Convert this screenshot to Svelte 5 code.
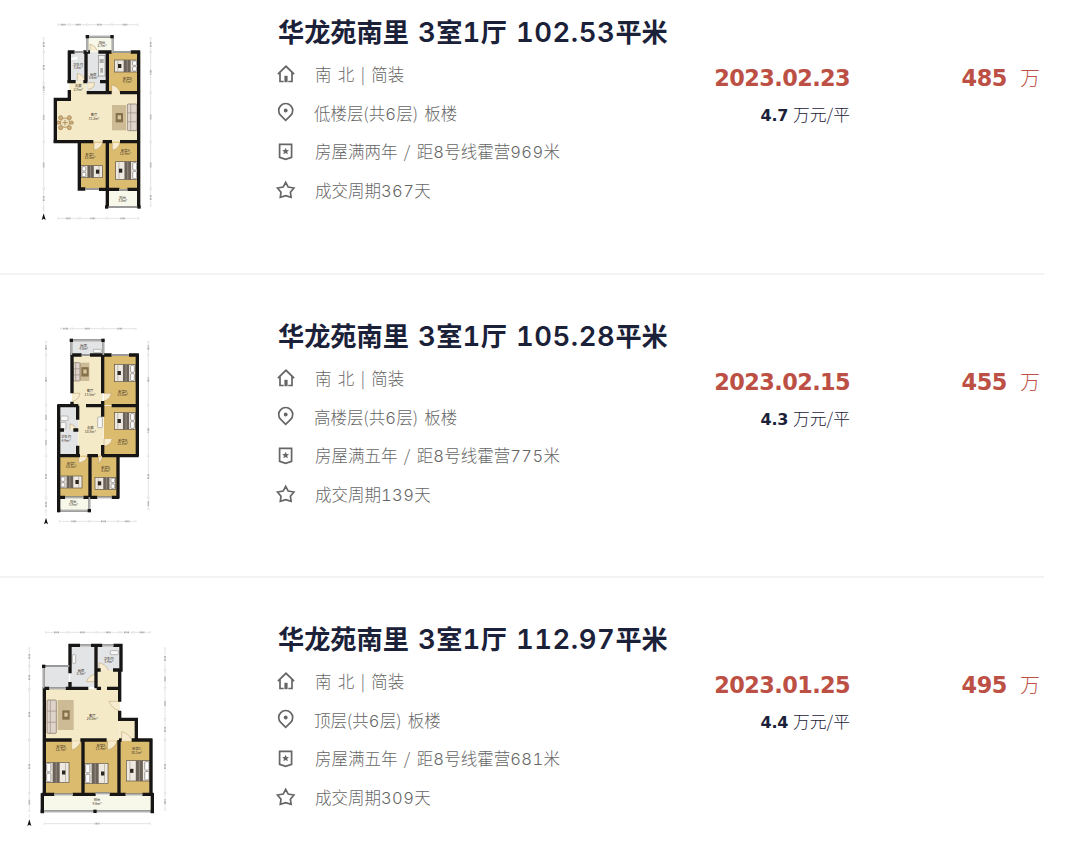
<script>
  const TAN = '#dbbb6e'
  const CREAM = '#f5eac8'
  const GREY = '#e3e4e6'
  const PALE = '#f7f8e9'

  // Floor plans are drawn at three units per pixel
  const planA = {
    dx: 90,
    dy: 30,
    rooms: [
      [172, 80, 76, 46, PALE], [118, 126, 50, 88, GREY], [170, 126, 62, 120, GREY],
      [118, 214, 52, 52, CREAM], [234, 126, 92, 122, TAN], [78, 266, 248, 129, CREAM],
      [122, 248, 204, 20, CREAM],
      [150, 395, 82, 142, TAN], [236, 395, 90, 142, TAN], [230, 542, 98, 50, PALE],
    ],
    walls: 'M118 122V218M114 126H134M160 126H180M205 126H245M302 126H330M168 126V215M232 126V250M326 122V592M112 215H137M160 215H172M210 215H232M118 240V268H76V395H190M170 248H245M270 248H326M218 395H246M270 395H326M148 395V537H166M232 395V592M207 538H268M292 538H330',
    windows: 'M134 126H160M245 126H302M172 80V126M172 80H248V126M166 537H207M268 540H292M230 591H328',
    dots: [[172, 80], [246, 80], [230, 591], [327, 591], [76, 394]],
    beds: [[253, 150, 70, 36, true], [153, 467, 64, 36, false], [257, 455, 66, 54, true]],
    rugs: [[246, 285, 42, 76]],
    sofas: [[292, 282, 29, 80]],
    doors: 'M142 212V190Q160 194 166 212M174 218H194Q194 236 174 238M245 248V225Q266 230 270 248M192 398V420Q212 416 218 398M247 398V420Q266 416 270 398M180 122V102Q196 106 202 122',
    labels: [
      [216, 101, '阳台', '2.7m²'], [144, 168, '卫生间', '3.8m²'], [190, 198, '厨房', '5.6m²'],
      [145, 232, '走廊', '2.9m²'], [292, 210, '卧室B', '9.3m²'], [192, 319, '客厅', '31.2m²'],
      [180, 437, '卧室C', '10.8m²'], [286, 425, '卧室A', '12.4m²'], [278, 566, '阳台', '3.8m²'],
    ],
    table: [105, 338],
    top: { y: 44, stops: [82, 118, 172, 245, 326] },
    bottom: { y: 625, stops: [82, 148, 230, 328] },
    left: { x: 41, stops: [82, 126, 220, 250, 395, 536, 596] },
    right: { x: 362, stops: [82, 126, 248, 395, 536, 590] },
    north: [41, 622],
  }

  const planB = {
    dx: 90,
    dy: 33,
    rooms: [
      [124, 76, 94, 42, GREY], [126, 120, 92, 150, CREAM], [222, 120, 100, 150, TAN],
      [86, 272, 58, 148, GREY], [145, 268, 76, 156, CREAM], [222, 272, 100, 150, TAN],
      [88, 422, 92, 125, TAN], [184, 422, 80, 125, TAN], [86, 550, 92, 38, PALE],
    ],
    walls: 'M126 118V235M126 260V270M218 120V235M218 258V305M218 390V422M322 116V424M122 120H155M180 120H245M297 120H326M82 272H145M168 272H215M245 272H322M86 270V586M143 272V314M143 392V422M86 345H102M130 345H145M82 422H150M172 422H204M216 422H326M180 422V549M264 422V549M82 547H105M160 547H202M245 547H268',
    windows: 'M155 120H180M245 120H297M124 76H220V120M124 76V120M105 547H160M202 547H245M86 587H178V547',
    dots: [[124, 76], [219, 76], [86, 587], [178, 587]],
    beds: [[254, 148, 62, 52, true], [254, 293, 62, 50, true], [90, 483, 66, 36, false], [195, 487, 62, 36, true]],
    rugs: [[150, 143, 28, 55]],
    sofas: [[130, 143, 20, 55]],
    doors: 'M130 235H150Q146 254 130 258M222 235H244Q240 254 222 258M146 425V444Q166 440 172 425M206 425V446Q212 440 218 425M222 372V394Q244 390 246 372M120 344V326Q136 330 140 344',
    labels: [
      [161, 95, '厨房', '4.0m²'], [180, 232, '客厅', '13.5m²'], [278, 234, '卧室A', '13.0m²'],
      [108, 370, '卫生间', '4.9m²'], [181, 343, '走廊', '10.5m²'], [278, 380, '卧室B', '11.8m²'],
      [124, 450, '卧室C', '10.5m²'], [227, 461, '卧室D', '8.8m²'], [130, 564, '阳台', '3.9m²'],
    ],
    props: [[203, 306, 14, 32], [92, 303, 22, 14], [92, 322, 16, 20], [190, 103, 24, 10]],
    top: { y: 41, stops: [90, 125, 220, 320] },
    bottom: { y: 619, stops: [86, 178, 264, 320] },
    left: { x: 48, stops: [78, 120, 270, 345, 422, 548, 590] },
    right: { x: 355, stops: [78, 120, 270, 422, 548, 585] },
    north: [48, 620],
  }

  const planC = {
    dx: 45,
    dy: 39,
    rooms: [
      [86, 138, 76, 65, GREY], [165, 76, 78, 125, GREY], [247, 76, 70, 75, GREY],
      [247, 150, 67, 57, CREAM], [90, 207, 224, 155, CREAM], [314, 298, 48, 62, CREAM],
      [90, 362, 112, 160, TAN], [206, 362, 106, 160, TAN], [316, 362, 94, 160, TAN],
      [82, 525, 330, 52, PALE],
    ],
    walls: 'M165 72V160M165 186V205M160 76H195M228 76H262M295 76H322M243 76V205M318 72V155M314 150V245M314 272V298H364V360M247 150H257M294 150H318M85 205H103M152 205H220M245 205H258M276 205H314M88 202V522M84 360H170M196 360H275M312 360H320M350 360H412M204 360V522M312 360V522M408 356V522M80 523H118M173 523H242M284 523H332M382 523H416M82 520V580M412 520V580',
    windows: 'M195 76H228M262 76H295M86 205V138H163M103 205H152M118 523H173M242 520H284M332 523H382M82 574H412',
    dots: [[86, 139], [82, 574], [240, 574], [412, 574]],
    beds: [[92, 427, 70, 61, false], [209, 430, 70, 61, false], [334, 422, 71, 61, true]],
    rugs: [[128, 240, 48, 90]],
    sofas: [[96, 240, 28, 100]],
    doors: 'M241 162Q220 168 214 185H241M314 244H282Q290 266 312 272M170 364V390Q190 384 198 364M278 364V390Q300 384 306 364M320 358V335Q340 340 350 358M252 151V128Q272 132 280 151',
    labels: [
      [198, 155, '厨房', '5.3m²'], [281, 119, '卫生间', '3.4m²'], [232, 290, '客厅', '28.0m²'],
      [138, 383, '卧室B', '12.7m²'], [258, 381, '卧室A', '11.4m²'], [365, 391, '卧室C', '10.1m²'],
      [246, 544, '阳台', '9.6m²'],
    ],
    props: [[172, 104, 10, 26], [286, 92, 24, 12]],
    top: { y: 37, stops: [90, 160, 245, 315, 355, 408] },
    bottom: { y: 611, stops: [86, 408] },
    left: { x: 43, stops: [82, 138, 208, 360, 520, 575] },
    right: { x: 450, stops: [82, 150, 205, 298, 360, 520, 572] },
    north: [43, 610],
  }

  const listings = [
    {
      title: '华龙苑南里 3室1厅 102.53平米', facing: '南 北 | 简装', floor: '低楼层(共6层) 板楼',
      note: '房屋满两年 / 距8号线霍营969米', cycle: '成交周期367天',
      date: '2023.02.23', unit: '4.7', total: '485', plan: planA,
    },
    {
      title: '华龙苑南里 3室1厅 105.28平米', facing: '南 北 | 简装', floor: '高楼层(共6层) 板楼',
      note: '房屋满五年 / 距8号线霍营775米', cycle: '成交周期139天',
      date: '2023.02.15', unit: '4.3', total: '455', plan: planB,
    },
    {
      title: '华龙苑南里 3室1厅 112.97平米', facing: '南 北 | 简装', floor: '顶层(共6层) 板楼',
      note: '房屋满五年 / 距8号线霍营681米', cycle: '成交周期309天',
      date: '2023.01.25', unit: '4.4', total: '495', plan: planC,
    },
  ]

  // Split digits from Chinese so each gets its own font
  const runs = (text) => text.split(/([\d.]+)/).filter(Boolean)
  const isNum = (run) => /^[\d.]+$/.test(run)
  const pairs = (stops) => stops.slice(1).map((s, i) => [stops[i], s])
</script>

{#snippet mixed(text)}{#each runs(text) as r}<span class:num={isNum(r)}>{r}</span>{/each}{/snippet}

{#snippet hdim(d)}
  {#each pairs(d.stops) as [a, b]}
    <path class="dim" d="M{a + 3} {d.y}H{(a + b) / 2 - 9}M{(a + b) / 2 + 9} {d.y}H{b - 3}M{a + 2} {d.y - 4}V{d.y + 4}M{b - 2} {d.y - 4}V{d.y + 4}" />
    <path class="dim-value" d="M{(a + b) / 2 - 8} {d.y}h16" />
  {/each}
{/snippet}

{#snippet vdim(d)}
  {#each pairs(d.stops) as [a, b]}
    <path class="dim" d="M{d.x} {a + 3}V{(a + b) / 2 - 9}M{d.x} {(a + b) / 2 + 9}V{b - 3}M{d.x - 4} {a + 2}H{d.x + 4}M{d.x - 4} {b - 2}H{d.x + 4}" />
    <path class="dim-value" d="M{d.x} {(a + b) / 2 - 8}v16" />
  {/each}
{/snippet}

{#snippet bed([x, y, w, h, flip])}
  <g transform={flip ? `translate(${x + w} ${y}) scale(-1 1)` : `translate(${x} ${y})`}>
    <rect width={w} height={h} fill="#eee9e0" stroke="#5c5040" stroke-width="2" />
    <rect x="3" y="3" width={w * 0.18} height={h / 2 - 5} rx="3" fill="#fff" stroke="#77706a" stroke-width="2" />
    <rect x="3" y={h / 2 + 2} width={w * 0.18} height={h / 2 - 5} rx="3" fill="#fff" stroke="#77706a" stroke-width="2" />
    <rect x={w * 0.3} y="0" width={w * 0.3} height={h} fill="#6b6259" />
    <path d="M{w * 0.45} 0V{h}M{w * 0.85} 0V{h}" stroke="#aaa198" stroke-width="2" />
    <rect x={w * 0.7} y={h / 2 - 6} width="10" height="12" fill="#29251f" />
  </g>
{/snippet}

{#snippet floorplan(p)}
  <svg class="plan" viewBox="0 0 540 690" aria-label="户型图">
    <g transform="translate({p.dx} {p.dy})">
      {#each p.rooms as [x, y, w, h, fill]}
        <rect {x} {y} width={w} height={h} {fill} />
      {/each}
      {#each p.rugs as [x, y, w, h]}
        <rect {x} {y} width={w} height={h} fill="#cdbb96" />
        <rect x={x + w / 2 - 10} y={y + h / 2 - 14} width="22" height="28" fill="#85704b" />
        <rect x={x + w / 2 - 4} y={y + h / 2 - 7} width="10" height="12" fill="#d8c69e" />
      {/each}
      {#each p.sofas as [x, y, w, h]}
        <rect {x} {y} width={w} height={h} rx="3" fill="#ded4ca" stroke="#786b61" stroke-width="2" />
        <path d="M{x} {y + h / 3}h{w}M{x} {y + h * 2 / 3}h{w}M{x + w * 0.35} {y}v{h}" stroke="#9b8b80" stroke-width="2" />
      {/each}
      {#each p.props ?? [] as [x, y, w, h]}
        <rect {x} {y} width={w} height={h} rx="2" fill="#f7f7f5" stroke="#9c9c98" stroke-width="2" />
      {/each}
      {#if p.table}
        <g transform="translate({p.table.join(' ')})" fill="#d3b380" stroke="#957340" stroke-width="2">
          <circle cx="-13" cy="-15" r="6" /><circle cx="13" cy="15" r="6" />
          <circle cx="-13" cy="15" r="6" /><circle cx="13" cy="-15" r="6" />
          <circle cx="-20" cy="0" r="5" /><circle cx="20" cy="0" r="5" />
          <circle r="14" fill="#eee0ba" />
          <path d="M-8 0H8M0 -8V8" />
        </g>
        <rect x="205" y="136" width="20" height="62" fill="#efefec" stroke="#888" stroke-width="2" />
        <path d="M209 147h12v12h-12zM211 174h8v14h-8z" fill="#aaa" />
        <path d="M124 144l18-5v10h-18z" fill="#fff" />
      {/if}
      {#each p.beds as b}{@render bed(b)}{/each}
      <path class="door" d={p.doors} />
      <path class="wall" d={p.walls} />
      <path class="window" d={p.windows} />
      <path class="pane" d={p.windows} />
      {#each p.dots as [x, y]}
        <rect x={x - 5} y={y - 5} width="10" height="10" fill="#161616" />
      {/each}
      {#each p.labels as [x, y, name, area]}
        <text {x} {y}>{name}</text>
        <text {x} y={y + 10}>{area}</text>
      {/each}
      {@render hdim(p.top)}
      {@render hdim(p.bottom)}
      {@render vdim(p.left)}
      {@render vdim(p.right)}
      <path d="M{p.north[0]} {p.north[1] - 12}l6 20l-6 -4l-6 4z" fill="#111" />
      <path class="dim" d="M{p.north[0]} {p.north[1] - 28}v12" />
    </g>
  </svg>
{/snippet}

<main>
  {#each listings as l}
    <article>
      {@render floorplan(l.plan)}
      <div class="info">
        <h2>{@render mixed(l.title)}</h2>
        <ul>
          <li>
            <svg class="icon" viewBox="0 0 18 18">
              <path d="M.9 9.2 9 1.3l8.1 7.9M3 7.5v9h3.7M11.3 16.5H15v-9" />
              <path class="solid" d="M7.4 10.8h3.2v6.4H7.4z" />
            </svg>
            <span>{@render mixed(l.facing)}</span>
          </li>
          <li class="floor">
            <svg class="icon" viewBox="0 0 18 18">
              <path d="M8.7 16.4 3.7 11.4a7 7 0 1 1 10 0z" />
              <circle class="solid" cx="8.7" cy="6.5" r="1.9" />
            </svg>
            <span>{@render mixed(l.floor)}</span>
          </li>
          <li>
            <svg class="icon" viewBox="0 0 18 18">
              <path d="M2.6 2.3h12v13l-6 2.1-6-2.1z" />
              <path class="solid" d="m8.6 5.7 1 2.3 2.5.2-1.9 1.6.6 2.4-2.2-1.3-2.2 1.3.6-2.4-1.9-1.6 2.5-.2z" />
            </svg>
            <span>{@render mixed(l.note)}</span>
          </li>
          <li>
            <svg class="icon" viewBox="0 0 18 18">
              <path d="m8.7 1.3 2.5 4.8 5.7.9-3.5 4.2.7 5.1-5.4-1.7-5.4 1.7.7-5.1L.5 7l5.7-.9z" />
            </svg>
            <span>{@render mixed(l.cycle)}</span>
          </li>
        </ul>
      </div>
      <div class="deal">
        <div class="date">{l.date}</div>
        <div class="unit"><b>{l.unit}</b><span>万元/平</span></div>
      </div>
      <div class="total"><b>{l.total}</b><span>万</span></div>
    </article>
  {/each}
</main>

<style>
  :global(body) {
    background: #fff;
  }

  main {
    width: 1044px;
    height: 848px;
    overflow: hidden;
    font-family: "Noto Sans CJK SC", sans-serif;
  }

  article {
    box-sizing: border-box;
    display: grid;
    grid-template-columns: 277px 400px 173px 190px;
    height: 303px;
    padding-top: 29px;
    border-bottom: 2px solid #f3f3f3;
  }

  article:first-child {
    height: 275px;
    padding-top: 0;
  }

  article:last-child {
    border-bottom: none;
  }

  .plan {
    display: block;
    width: 180px;
    height: 230px;
  }

  .wall {
    fill: none;
    stroke: #171614;
    stroke-width: 10;
  }

  .window {
    fill: none;
    stroke: #777;
    stroke-width: 6;
  }

  .pane {
    fill: none;
    stroke: #c9c9c9;
    stroke-width: 2.5;
  }

  .door {
    fill: #f8ecd0;
    stroke: #b29a68;
    stroke-width: 1.5;
  }

  .dim {
    fill: none;
    stroke: #c8c8c8;
    stroke-width: 1.5;
  }

  .dim-value {
    fill: none;
    stroke: #aaa;
    stroke-width: 5;
    stroke-dasharray: 3 1;
  }

  .plan text {
    font-size: 10px;
    fill: #3b342a;
    text-anchor: middle;
  }

  h2 {
    margin: 13px 0 0 1px;
    height: 36px;
    line-height: 36px;
    font-size: 26.2px;
    font-weight: 700;
    color: #1b2138;
    white-space: pre;
    word-spacing: 3px;
  }

  h2 .num {
    font-family: Inter, sans-serif;
    font-size: 27.4px;
    font-weight: 600;
    font-variant-numeric: tabular-nums;
    letter-spacing: 0.6px;
  }

  ul {
    margin: 5.5px 0 0;
    padding: 0;
    list-style: none;
  }

  li {
    display: flex;
    align-items: center;
    gap: 20px;
    height: 38.7px;
    font-size: 16.5px;
    font-weight: 300;
    color: #666;
    white-space: pre;
    word-spacing: 2.7px;
  }

  li .num {
    font-family: Inter, sans-serif;
    font-weight: 300;
    font-variant-numeric: tabular-nums;
    letter-spacing: 0.4px;
  }

  .floor {
    gap: 19px;
  }

  .icon {
    width: 18px;
    height: 18px;
    overflow: visible;
    fill: none;
    stroke: #666;
    stroke-width: 1.7;
  }

  .solid {
    fill: #666;
    stroke: none;
  }

  .deal,
  .total {
    text-align: right;
    white-space: nowrap;
  }

  .deal b,
  .total b,
  .date {
    font-family: "DejaVu Sans", sans-serif;
    font-weight: 700;
  }

  .date {
    margin-top: 60px;
    height: 36px;
    line-height: 36px;
    font-size: 22.4px;
    letter-spacing: -0.6px;
    color: #bd5044;
  }

  .unit {
    display: flex;
    justify-content: flex-end;
    align-items: baseline;
    gap: 5px;
    margin-top: 5px;
    line-height: 26px;
    font-size: 16.8px;
    font-weight: 300;
    color: #1b2138;
  }

  .unit b {
    font-size: 16px;
    letter-spacing: -0.3px;
  }

  .total {
    display: flex;
    justify-content: flex-end;
    align-items: baseline;
    gap: 13px;
    margin-top: 60px;
    height: 36px;
    line-height: 36px;
    font-size: 20px;
    font-weight: 300;
    color: #bd5044;
  }

  .total b {
    font-size: 22.4px;
    letter-spacing: -0.4px;
  }
</style>
